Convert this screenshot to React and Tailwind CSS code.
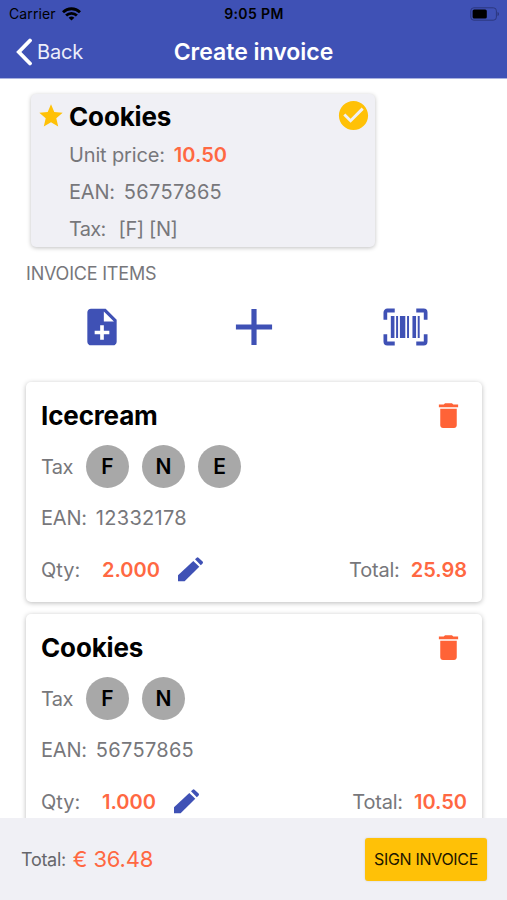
import React from 'react';
import { MdAdd, MdCheckCircle, MdDelete, MdNoteAdd, MdStar } from 'react-icons/md';

const items = [
  { name: 'Icecream', taxes: ['F', 'N', 'E'], ean: '12332178', qty: '2.000', total: '25.98' },
  { name: 'Cookies', taxes: ['F', 'N'], ean: '56757865', qty: '1.000', total: '10.50' },
];

const StatusBar = () => (
  <div className="grid h-[27px] grid-cols-[1fr_auto_1fr] items-center pr-[8px] pl-[9px] text-black">
    <div className="flex items-center gap-[6px]">
      <span className="text-[14px] tracking-[0.1px]">Carrier</span>
      <svg width="19" height="14" viewBox="0 0 19 14" fill="none" stroke="currentColor" strokeWidth="2.8">
        <path d="M1 5.2a12.2 12.2 0 0 1 17 0" />
        <path d="M4.1 8.5a7.8 7.8 0 0 1 10.8 0" />
        <path d="M9.5 13.6 6.6 10.8a4.2 4.2 0 0 1 5.8 0z" fill="currentColor" stroke="none" />
      </svg>
    </div>
    <span className="text-[14px] font-semibold tracking-[0.4px]">9:05 PM</span>
    <svg className="justify-self-end" width="30" height="14" viewBox="0 0 30 14">
      <rect x="1.8" y="0.8" width="25.6" height="12.4" rx="3" fill="none" stroke="#2c377f" />
      <rect x="3.6" y="2.4" width="14.2" height="9.2" rx="1.6" fill="#000" />
      <path d="M28.5 5v4c1-.4 1.5-1.1 1.5-2s-.5-1.6-1.5-2z" fill="#2c377f" />
    </svg>
  </div>
);

const Header = () => (
  <header className="h-[79px] shrink-0 border-b border-[#a9b1e0] bg-[#3f51b5]">
    <StatusBar />
    <div className="grid h-[50px] grid-cols-[1fr_auto_1fr] items-center">
      <button className="flex items-center gap-[5px] pl-[16px] text-[20px] tracking-[-0.2px] text-[#eceefa]">
        <svg width="16" height="28" viewBox="0 0 16 28" fill="none" stroke="#fff" strokeWidth="3.8">
          <path d="M14 2.5 2.8 14 14 25.5" strokeLinecap="round" />
        </svg>
        Back
      </button>
      <h1 className="text-[23px] font-semibold text-white">Create invoice</h1>
    </div>
  </header>
);

const BarcodeIcon = () => (
  <svg className="mr-[2px]" width="45" height="38" viewBox="0 0 46 38" preserveAspectRatio="none" fill="#3f51b5">
    <g fill="none" stroke="#3f51b5" strokeWidth="3.8">
      <path d="M2.4 11.8V4.5a2 2 0 0 1 2-2H12M34 2.5h7.6a2 2 0 0 1 2 2v7.3" />
      <path d="M2.4 26.2v7.3a2 2 0 0 0 2 2H12M34 35.5h7.6a2 2 0 0 0 2-2v-7.3" />
    </g>
    <path d="M8 8h3.7v22H8zM13.4 8h2v22h-2zM17.3 8h5.5v22h-5.5zM24.6 8h2v22h-2zM30.1 8h3.7v22h-3.7zM35.5 8h2v22h-2z" />
  </svg>
);

const PencilIcon = () => (
  <svg className="ml-[18px] -mt-[1px]" width="25" height="25" viewBox="0 0 25 25" fill="#3f51b5">
    <path d="M0 24.2v-5.9L15.3 3.9l6 5.9L6.6 24.2z" />
    <path d="M17 2.3 18.7.7q.9-.9 1.8 0l4.1 3.9q.8.9 0 1.8l-1.8 1.8z" />
  </svg>
);

// Product that is currently picked
const SelectedProduct = () => (
  <section className="mt-[15px] ml-[31px] h-[152.5px] w-[344px] rounded-[5px] bg-[#f0f0f5] text-[20px] leading-none text-[#77777b] shadow-[0_1px_4px_rgba(0,0,0,0.25)]">
    <div className="flex h-[43px] items-center pl-[6px] pr-[4px]">
      <MdStar size={28} color="#ffc107" />
      <h2 className="mt-[2px] ml-[4px] text-[26px] font-bold tracking-[-0.15px] text-black">Cookies</h2>
      <MdCheckCircle className="ml-auto" size={35} color="#ffc107" />
    </div>
    <div className="pl-[38px]">
      <p className="flex h-[36.5px] items-center gap-[9px] tracking-[-0.15px]">
        Unit price: <span className="font-semibold tracking-normal text-[#ff6842]">10.50</span>
      </p>
      <p className="flex h-[36.5px] items-center gap-[9px] tracking-[-0.2px]">
        EAN: <span className="tracking-[0.3px]">56757865</span>
      </p>
      <p className="flex h-[36.5px] items-center gap-[13px] pt-[1px] tracking-[-0.7px]">
        Tax: <span className="tracking-[-0.4px]">[F] [N]</span>
      </p>
    </div>
  </section>
);

const InvoiceItem = ({ item }) => (
  <li className="mb-[12px] h-[220px] rounded-[5px] bg-white pt-[8px] pl-[15px] pr-[15px] text-[20px] leading-none text-[#77777b] shadow-[0_1px_5px_rgba(0,0,0,0.27)]">
    <div className="flex h-[51.3px] items-center justify-between">
      <h2 className="text-[26px] font-bold tracking-[-0.15px] text-black">{item.name}</h2>
      <MdDelete className="mr-[2px] -mt-[1px]" size={33} color="#ff6337" />
    </div>
    <div className="flex h-[51.3px] items-center">
      <span className="w-[45px] tracking-[-0.6px]">Tax</span>
      {item.taxes.map((tax) => (
        <span
          key={tax}
          className="mr-[13px] flex h-[43px] w-[43px] items-center justify-center rounded-full bg-[#a8a8a8] text-[21px] font-semibold text-black"
        >
          {tax}
        </span>
      ))}
    </div>
    <div className="flex h-[51.3px] items-center gap-[9px] tracking-[-0.2px]">
      EAN: <span className="tracking-[0.3px]">{item.ean}</span>
    </div>
    <div className="flex h-[51.3px] items-center">
      <span className="w-[61px]">Qty:</span>
      <span className="font-semibold text-[#ff6842]">{item.qty}</span>
      <PencilIcon />
      <span className="ml-auto tracking-[-0.2px]">Total:</span>
      <span className="ml-[11px] font-semibold text-[#ff6842]">{item.total}</span>
    </div>
  </li>
);

const App = () => {
  return (
    <div className="flex h-[900px] w-[507px] flex-col overflow-hidden bg-white font-['Inter',sans-serif]">
      <Header />

      <main className="min-h-0 flex-1 overflow-hidden">
        <SelectedProduct />
        <h3 className="flex h-[54px] items-center pl-[26px] text-[18px] tracking-[-0.2px] text-[#77777b]">INVOICE ITEMS</h3>

        {/* Ways to add an item */}
        <div className="mr-[25px] mb-[28.5px] ml-[26px] grid h-[53px] grid-cols-3 grid-rows-[53px] place-items-center text-[#3f51b5]">
          <MdNoteAdd size={44} />
          <MdAdd size={62} />
          <BarcodeIcon />
        </div>

        <ul className="mr-[25px] ml-[26px]">
          {items.map((item) => (
            <InvoiceItem key={item.name} item={item} />
          ))}
        </ul>
      </main>

      <footer className="flex h-[82px] shrink-0 items-center justify-between bg-[#f0f0f5] pr-[20px] pl-[21px]">
        <p className="flex items-center gap-[7px] text-[18px] tracking-[-0.3px] text-[#66666b]">
          Total: <span className="text-[22px] tracking-[-0.15px] text-[#ff6842]">€ 36.48</span>
        </p>
        <button className="h-[43px] w-[122px] rounded-[3px] bg-[#ffc107] text-[16px] tracking-[-0.3px] whitespace-nowrap text-[#1c1600] shadow-[0_0_2px_rgba(0,0,0,0.15)]">
          SIGN INVOICE
        </button>
      </footer>
    </div>
  );
};

export default App;
